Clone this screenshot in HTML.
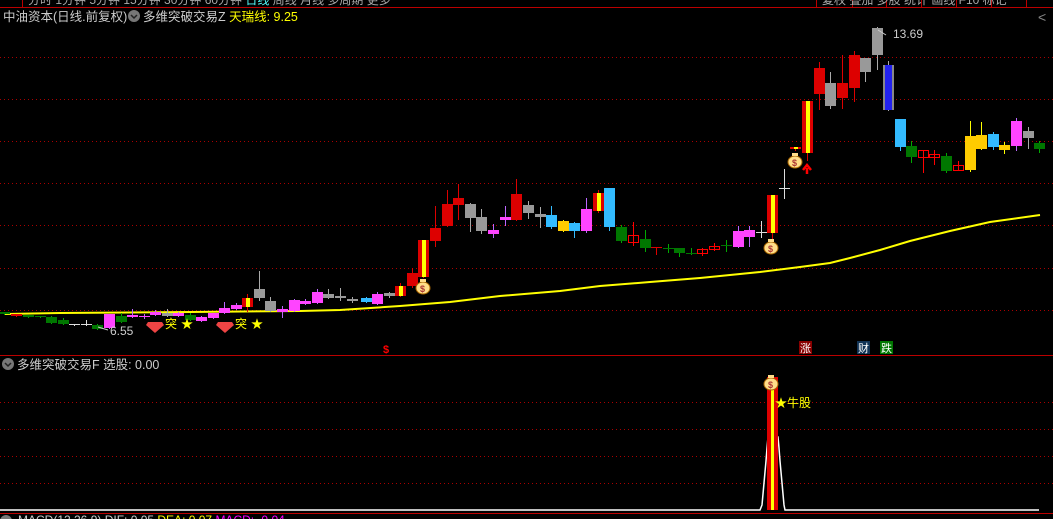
<!DOCTYPE html>
<html><head><meta charset="utf-8"><style>
html,body{margin:0;padding:0;background:#000;width:1053px;height:519px;overflow:hidden}
svg{display:block}
text{font-family:"Liberation Sans","Noto Sans CJK SC",sans-serif}
</style></head><body>
<svg id="s" width="1053" height="519" xmlns="http://www.w3.org/2000/svg">
<!-- top menu -->
<rect x="0" y="0" width="1053" height="7" fill="#000"/>
<line x1="0" y1="7.5" x2="1053" y2="7.5" stroke="#b00" stroke-width="1"/>
<line x1="22.5" y1="0" x2="22.5" y2="7" stroke="#b00"/>
<text x="28" y="4" font-size="12" fill="#aaa">分时 1分钟 5分钟 15分钟 30分钟 60分钟 <tspan fill="#5ff">日线</tspan> 周线 月线 多周期 更多</text>
<g stroke="#b00"><line x1="816.5" y1="0" x2="816.5" y2="7"/><line x1="852.5" y1="0" x2="852.5" y2="7"/><line x1="886.5" y1="0" x2="886.5" y2="7"/><line x1="921.5" y1="0" x2="921.5" y2="7"/><line x1="956.5" y1="0" x2="956.5" y2="7"/><line x1="991.5" y1="0" x2="991.5" y2="7"/><line x1="1026.5" y1="0" x2="1026.5" y2="7"/></g>
<text x="822" y="4" font-size="12" fill="#aaa">复权  叠加  多股  统计  画线  F10  标记</text>
<!-- grid -->
<g stroke="#a00" stroke-width="1" stroke-dasharray="1,3">
<line x1="0" y1="57.5" x2="1053" y2="57.5"/><line x1="0" y1="99.5" x2="1053" y2="99.5"/><line x1="0" y1="141.5" x2="1053" y2="141.5"/><line x1="0" y1="183.5" x2="1053" y2="183.5"/><line x1="0" y1="225.5" x2="1053" y2="225.5"/><line x1="0" y1="268.5" x2="1053" y2="268.5"/><line x1="0" y1="310.5" x2="1053" y2="310.5"/>
<line x1="0" y1="402.5" x2="1053" y2="402.5"/><line x1="0" y1="429.5" x2="1053" y2="429.5"/><line x1="0" y1="456.5" x2="1053" y2="456.5"/><line x1="0" y1="483.5" x2="1053" y2="483.5"/>
</g>
<!-- header text -->
<text x="3" y="21" font-size="12.5" fill="#ccc">中油资本(日线.前复权)</text>
<circle cx="134" cy="16" r="6" fill="#777"/><path d="M131 15l3 3 3-3" stroke="#222" stroke-width="1.5" fill="none"/>
<text x="143" y="21" font-size="12.5" fill="#ccc">多维突破交易Z <tspan fill="#ff0">天瑞线: 9.25</tspan></text>
<text x="1038" y="22" font-size="14" fill="#888">&lt;</text>
<!-- MA line -->
<polyline fill="none" stroke="#ff0" stroke-width="2" points="5,314 60,313 190,312 300,311 340,310 400,306 450,302 500,296 560,291 600,286 650,282 700,278 760,272 800,267 830,263 850,258 880,250 910,241 950,231 990,222 1040,215"/>
<g id="c"></g>
<!-- labels -->
<text x="893" y="38" font-size="12" fill="#ccc">13.69</text>
<path d="M878 30 l8 5" stroke="#ccc"/>
<text x="110" y="335" font-size="12" fill="#ccc">6.55</text>
<path d="M98 327 l10 3" stroke="#ccc"/>
<g font-size="12" fill="#ff0">
<polygon points="148,322 162,322 164,325 155,333 146,325" fill="#e44"/><text x="165" y="328">突</text><text x="181" y="328">★</text>
<polygon points="218,322 232,322 234,325 225,333 216,325" fill="#e44"/><text x="235" y="328">突</text><text x="251" y="328">★</text>
</g>
<text x="383" y="353" font-size="11" fill="#f00" font-weight="bold">$</text>
<rect x="799" y="341" width="13" height="13" fill="#800"/><text x="800" y="352" font-size="11" fill="#fff">涨</text>
<rect x="857" y="341" width="13" height="13" fill="#135"/><text x="858" y="352" font-size="11" fill="#fff">财</text>
<rect x="880" y="341" width="13" height="13" fill="#070"/><text x="881" y="352" font-size="11" fill="#fff">跌</text>
<path d="M807 174 v-6 M803 170 l4-5 4 5" stroke="#f00" stroke-width="2.5" fill="none"/>
<!-- separator -->
<line x1="0" y1="355.5" x2="1053" y2="355.5" stroke="#b00"/>
<circle cx="8" cy="364" r="6" fill="#777"/><path d="M5 363l3 3 3-3" stroke="#222" stroke-width="1.5" fill="none"/>
<text x="17" y="369" font-size="12.5" fill="#ccc">多维突破交易F  选股: 0.00</text>
<!-- lower pane -->
<polyline fill="none" stroke="#fff" stroke-width="1.5" points="0,510 760,510 762,505 763,494 764,483 765,472 766,461 767,448 768,437 778,437 779,448 780,461 781,472 782,483 783,494 784,505 785,510 1039,510"/>
<rect x="767" y="377" width="11" height="133" fill="#d00"/><rect x="771" y="377" width="3" height="133" fill="#ff0"/>
<text x="775" y="407" font-size="12" fill="#ff0">★牛股</text>
<line x1="0" y1="513.5" x2="1053" y2="513.5" stroke="#b00"/>
<circle cx="6" cy="521" r="6" fill="#777"/>
<text x="18" y="524" font-size="12" fill="#ccc">MACD(12,26,9)  DIF: 0.05 <tspan fill="#ff0">DEA: 0.07</tspan> <tspan fill="#f0f">MACD: -0.04</tspan></text>
<g id="bags"></g>
</svg>
<script>
var C=[
// x, bodyTop, bodyBot, wickTop, wickBot, type
[4,312,314,312,314,'g'],[16,314,316,314,316,'r'],[28,315,317,315,317,'g'],[40,316,317,316,317,'g'],[51,317,323,316,323,'g'],[63,320,324,318,324,'g'],
[74,324,325,324,325,'w'],[86,324,325,320,325,'w'],[97,325,329,324,329,'g'],[109,314,328,314,328,'m'],[121,316,322,313,322,'g'],[132,315,317,309,317,'m'],
[144,316,317,314,318,'m'],[155,312,315,310,315,'m'],[167,313,316,309,316,'y2'],[178,313,316,312,316,'m'],[190,315,320,313,320,'g'],[201,317,321,316,321,'m'],
[213,313,318,313,318,'m'],[224,308,313,302,313,'m'],[236,305,309,303,309,'m'],[247,298,307,294,311,'ry'],[259,289,298,271,300,'y2'],[270,301,311,297,311,'y2'],
[282,309,312,306,317,'m'],[294,300,311,299,311,'m'],[305,301,304,299,304,'m'],[317,292,303,289,303,'m'],[328,294,298,289,298,'y2'],[340,296,298,288,300,'y2'],
[352,299,301,297,302,'y2'],[366,298,302,297,302,'b'],[377,294,304,292,304,'m'],[389,293,296,292,297,'y2'],
[400,286,296,283,296,'ry'],[412,273,286,268,287,'r'],[423,240,277,240,277,'ry'],[435,228,241,206,246,'r'],[447,204,226,190,226,'r'],[458,198,205,184,219,'r'],
[470,204,218,203,231,'y2'],[481,217,231,209,233,'y2'],[493,230,234,224,237,'m'],[505,217,220,206,225,'m'],[516,194,220,179,220,'r'],[528,205,213,201,218,'y2'],
[540,214,217,207,227,'y2'],[551,215,227,206,228,'b'],[563,221,231,220,231,'o'],[574,223,231,222,237,'b'],[586,209,231,198,232,'m'],[598,193,211,190,212,'ry'],
[609,188,227,188,230,'b'],[621,227,241,225,242,'g'],[633,235,242,222,245,'h'],[645,239,248,230,251,'g'],[656,247,248,247,254,'r'],[668,248,249,244,252,'g'],
[679,248,253,248,256,'g'],[691,253,254,248,254,'g'],[702,249,253,248,255,'h'],[714,246,249,243,250,'h'],[726,245,246,240,251,'g'],[738,231,247,226,247,'m'],
[749,230,237,226,246,'m'],[761,232,233,221,237,'w'],[772,195,233,195,250,'ry'],[784,188,189,169,198,'w'],[795,147,149,147,150,'ry'],
[807,101,153,101,160,'ry'],[819,68,94,62,109,'r'],[830,83,106,72,108,'y2'],[842,83,98,55,108,'r'],[854,55,88,51,101,'r'],[865,58,72,58,81,'y2'],
[877,28,55,27,69,'y2'],[888,65,110,61,110,'bl'],[900,119,147,119,150,'b'],[911,146,157,141,162,'g'],[923,150,157,150,172,'h'],[934,154,157,150,164,'h'],
[946,156,171,153,172,'g'],[958,165,170,161,170,'h'],[970,136,170,121,171,'o'],[981,135,149,122,149,'o'],[993,134,147,132,149,'b'],[1004,145,150,142,153,'o'],
[1016,121,146,118,150,'m'],[1028,131,138,127,148,'y2'],[1039,143,149,141,152,'g']];
var col={g:'#070',r:'#d00',w:'#ddd',m:'#f4f',y2:'#999',ry:'#d00',b:'#3bf',o:'#fc0',h:'#f00',bl:'#22e'};
var wk={g:'#0a0',r:'#d00',w:'#ddd',m:'#b6f',y2:'#aaa',ry:'#d00',b:'#3bf',o:'#ff0',h:'#f00',bl:'#aaa'};
var s='';
C.forEach(function(c){var x=c[0],t=c[5],h=Math.max(c[2]-c[1],1);
s+='<line x1="'+(x+.5)+'" y1="'+c[3]+'" x2="'+(x+.5)+'" y2="'+(c[4]+1)+'" stroke="'+wk[t]+'"/>';
if(t=='h'){s+='<rect x="'+(x-4.5)+'" y="'+(c[1]+.5)+'" width="10" height="'+h+'" fill="none" stroke="#f00"/>';}
else if(t=='w'){s+='<line x1="'+(x-5)+'" y1="'+(c[1]+.5)+'" x2="'+(x+6)+'" y2="'+(c[1]+.5)+'" stroke="#ddd"/>';}
else{s+='<rect x="'+(x-5)+'" y="'+c[1]+'" width="11" height="'+h+'" fill="'+col[t]+'"/>';
if(t=='ry')s+='<rect x="'+(x-1)+'" y="'+c[1]+'" width="4" height="'+h+'" fill="#ff0"/>';
if(t=='bl')s+='<rect x="'+(x-5)+'" y="'+c[1]+'" width="2" height="'+h+'" fill="#888"/><rect x="'+(x+4)+'" y="'+c[1]+'" width="2" height="'+h+'" fill="#888"/>';}
});
document.getElementById('c').innerHTML=s;
var B=[[423,287],[771,247],[795,161],[771,383]],b='';
B.forEach(function(p){b+='<ellipse cx="'+p[0]+'" cy="'+(p[1]+1)+'" rx="7" ry="6" fill="#fd8" stroke="#a60"/><rect x="'+(p[0]-3)+'" y="'+(p[1]-8)+'" width="6" height="3" fill="#fd8"/><text x="'+(p[0]-3)+'" y="'+(p[1]+5)+'" font-size="9" fill="#a33" font-weight="bold">$</text>';});
document.getElementById('bags').innerHTML=b;
</script>
</body></html>
